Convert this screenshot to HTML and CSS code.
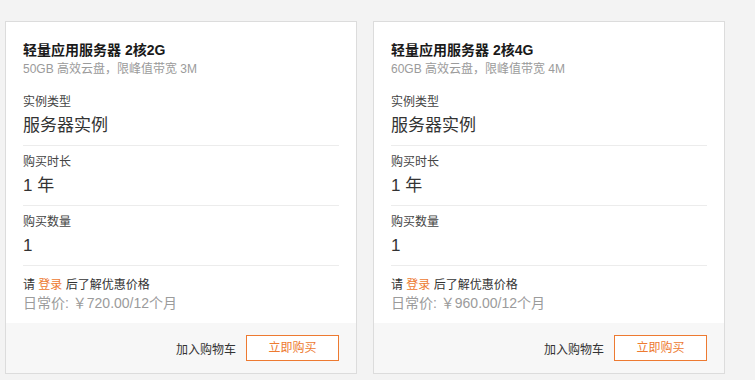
FILE: index.html
```html
<!DOCTYPE html>
<html>
   <head>
      <meta charset="utf-8">
      <meta name="viewport" content="width=device-width, initial-scale=1">
      <link rel="stylesheet" href="styles.css">
   </head>
   <body>
      <div class="cards">

         <!-- 2核2G -->
         <div class="card">
            <div class="card-body">
               <div class="head">
                  <div class="title">轻量应用服务器 2核2G</div>
                  <div class="desc">50GB 高效云盘，限峰值带宽 3M</div>
               </div>
               <div class="field">
                  <div class="label">实例类型</div>
                  <div class="value">服务器实例</div>
               </div>
               <div class="field">
                  <div class="label">购买时长</div>
                  <div class="value">1 年</div>
               </div>
               <div class="field">
                  <div class="label">购买数量</div>
                  <div class="value">1</div>
               </div>
               <div class="price">
                  <div class="login">请 <a href="#">登录</a> 后了解优惠价格</div>
                  <div class="normal">日常价: ￥720.00/12个月</div>
               </div>
            </div>
            <div class="card-foot">
               <a class="cart" href="#">加入购物车</a>
               <a class="buy" href="#">立即购买</a>
            </div>
         </div>

         <!-- 2核4G -->
         <div class="card">
            <div class="card-body">
               <div class="head">
                  <div class="title">轻量应用服务器 2核4G</div>
                  <div class="desc">60GB 高效云盘，限峰值带宽 4M</div>
               </div>
               <div class="field">
                  <div class="label">实例类型</div>
                  <div class="value">服务器实例</div>
               </div>
               <div class="field">
                  <div class="label">购买时长</div>
                  <div class="value">1 年</div>
               </div>
               <div class="field">
                  <div class="label">购买数量</div>
                  <div class="value">1</div>
               </div>
               <div class="price">
                  <div class="login">请 <a href="#">登录</a> 后了解优惠价格</div>
                  <div class="normal">日常价: ￥960.00/12个月</div>
               </div>
            </div>
            <div class="card-foot">
               <a class="cart" href="#">加入购物车</a>
               <a class="buy" href="#">立即购买</a>
            </div>
         </div>

      </div>
   </body>
</html>
```

FILE: styles.css
```css
body {
   margin : 0px;
   padding : 21px 0px 0px 5px;
   background-color : #f3f3f3;
   font-family : "Liberation Sans", Arial, "Noto Sans CJK SC", sans-serif;
   color : #333;
}

a {
   text-decoration : none;
}

.cards {
   display : flex;
   gap : 16px;
}

.card {
   width : 350px;
   border : 1px solid #dcdcdc;
   background-color : #fff;
}

.card-body {
   padding : 18px 17px 0px 17px;
}

.head {
   margin-bottom : 8px;
}

.title {
   font-size : 14px;
   line-height : 20px;
   font-weight : bold;
   color : #1a1a1a;
}

.desc {
   font-size : 12px;
   line-height : 18px;
   color : #9b9b9b;
}

.field {
   padding : 6px 0px 7px 0px;
   border-bottom : 1px solid #ececec;
}

.label {
   font-size : 12px;
   line-height : 20px;
   color : #444;
}

.value {
   margin-top : 2px;
   font-size : 17px;
   line-height : 24px;
   color : #333;
}

.price {
   padding : 10px 0px 10px 0px;
}

.login {
   font-size : 12px;
   line-height : 18px;
   color : #333;
}

.login a {
   color : #ed7a31;
}

.normal {
   font-size : 14px;
   line-height : 19px;
   color : #9b9b9b;
}

.card-foot {
   display : flex;
   justify-content : flex-end;
   align-items : center;
   gap : 10px;
   padding : 12px 17px 12px 17px;
   background-color : #f7f7f7;
}

.cart {
   font-size : 12px;
   color : #333;
}

.buy {
   box-sizing : border-box;
   width : 93px;
   height : 26px;
   border : 1px solid #ed7a31;
   background-color : #fff;
   color : #ed7a31;
   font-size : 12px;
   line-height : 24px;
   text-align : center;
}
```
